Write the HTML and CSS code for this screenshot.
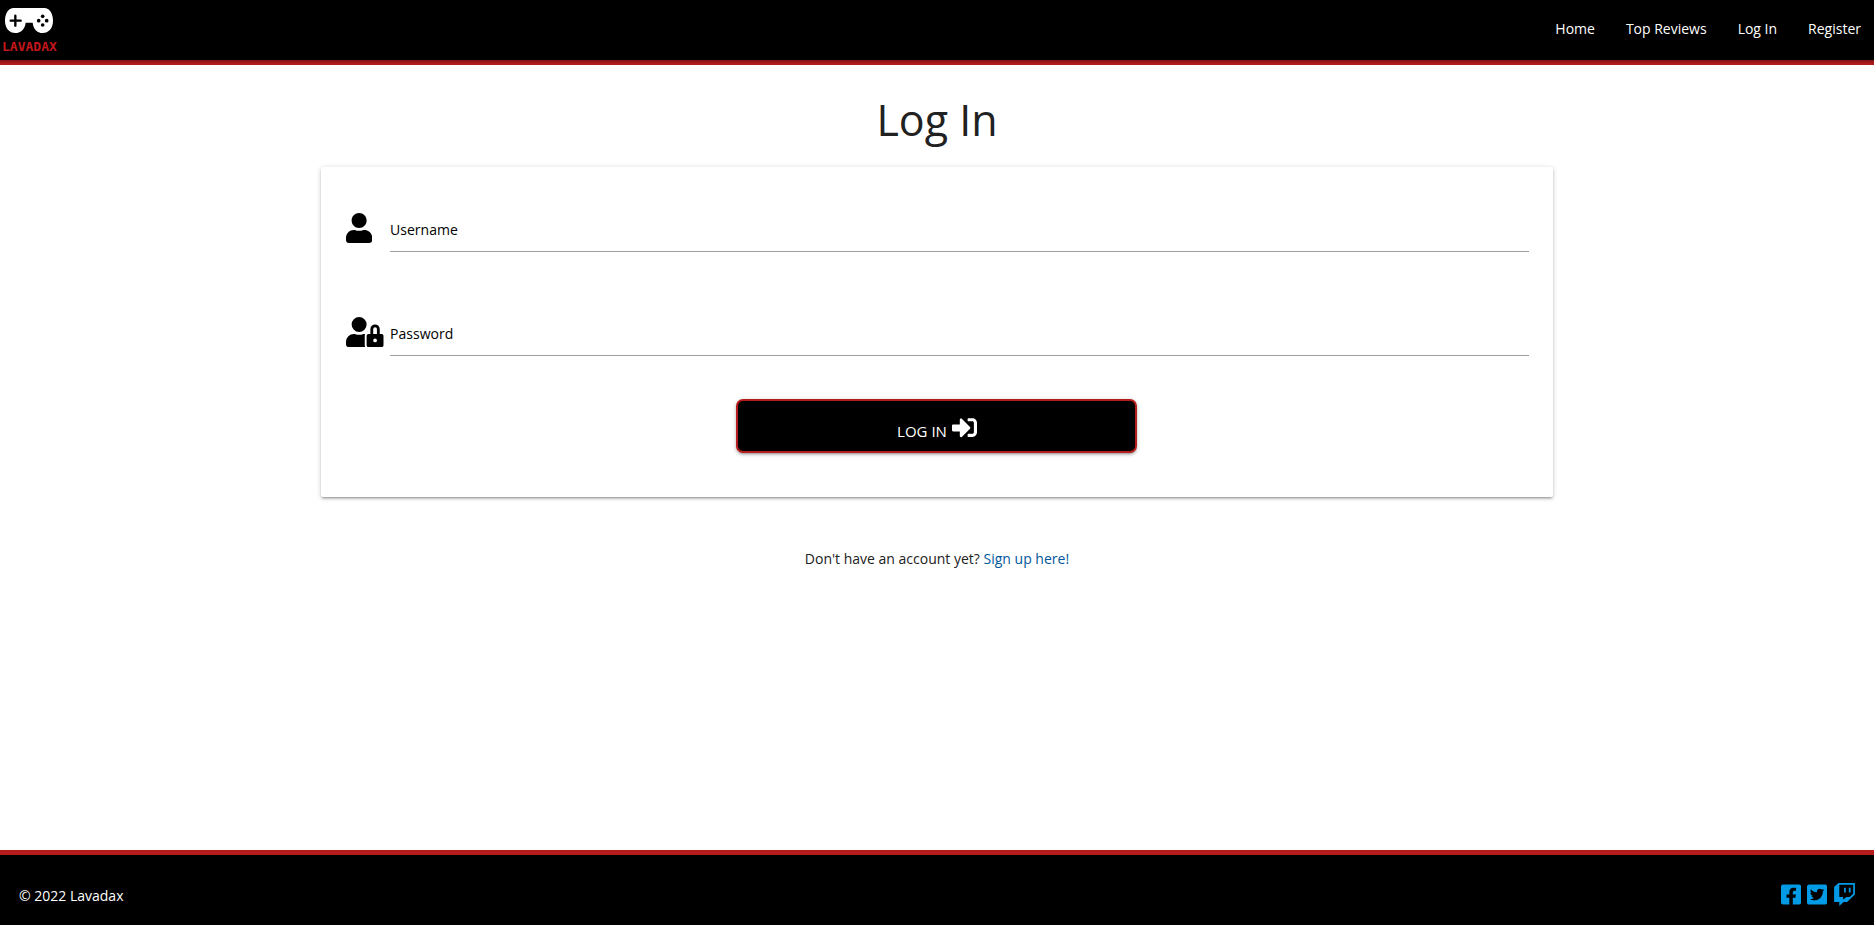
FILE: index.html
```html
<!DOCTYPE html>
<html lang="en">
<head>
<meta charset="utf-8">
<title>Lavadax - Log In</title>
<link rel="stylesheet" href="styles.css">
</head>
<body>
<header class="site-header">
  <a class="logo" href="#" aria-label="Lavadax home">
    <svg class="logo-pad" viewBox="0 0 144 75" aria-hidden="true">
      <path fill="#fff" d="M24 0H120C135 2 144 18 144 38C144 60 131 75 113 75C96 75 85 62 83 44H62C60 62 48 75 31 75C13 75 0 60 0 38C0 18 9 2 24 0Z"/>
      <path fill="none" stroke="#000" stroke-width="7" stroke-linecap="round" d="M31 23v30M17 38h30"/>
      <g fill="#000"><circle cx="113" cy="25" r="5.500"/><circle cx="113" cy="51" r="5.500"/><circle cx="101" cy="38" r="5.500"/><circle cx="125" cy="38" r="5.500"/></g>
    </svg>
    <span class="logo-text">LAVADAX</span>
  </a>
  <nav class="site-nav">
    <a href="#">Home</a>
    <a href="#">Top Reviews</a>
    <a href="#">Log In</a>
    <a href="#">Register</a>
  </nav>
</header>
<main class="container">
  <h1 class="title">Log In</h1>
  <form class="card">
    <div class="field">
      <svg class="field-icon" viewBox="0 0 448 512" aria-hidden="true"><path d="M224 256c70.7 0 128-57.3 128-128S294.700 0 224 0 96 57.300 96 128s57.300 128 128 128zm89.600 32h-16.700c-22.200 10.200-46.900 16-72.900 16s-50.600-5.800-72.900-16h-16.700C60.200 288 0 348.200 0 422.400V464c0 26.500 21.500 48 48 48h352c26.500 0 48-21.500 48-48v-41.600c0-74.200-60.200-134.400-134.400-134.400z"/></svg>
      <div class="field-box">
        <input id="username" class="field-input" type="text">
        <label class="field-label" for="username">Username</label>
      </div>
    </div>
    <div class="field">
      <svg class="field-icon" viewBox="0 0 640 512" aria-hidden="true"><path d="M224 256A128 128 0 1 0 96 128a128 128 0 0 0 128 128zm96 64a63.080 63.080 0 0 1 8.100-30.500c-4.800-.5-9.500-1.500-14.500-1.500h-16.700a174.080 174.080 0 0 1-145.800 0h-16.700A134.430 134.430 0 0 0 0 422.400V464a48 48 0 0 0 48 48h280.900a63.540 63.540 0 0 1-8.900-32zm288-32h-32v-80a80 80 0 0 0-160 0v80h-32a32 32 0 0 0-32 32v160a32 32 0 0 0 32 32h224a32 32 0 0 0 32-32V320a32 32 0 0 0-32-32zM496 432a32 32 0 1 1 32-32 32 32 0 0 1-32 32zm32-144h-64v-80a32 32 0 0 1 64 0z"/></svg>
      <div class="field-box">
        <input id="password" class="field-input" type="password">
        <label class="field-label" for="password">Password</label>
      </div>
    </div>
    <button class="submit" type="button">
      <span>LOG IN</span>
      <svg class="submit-icon" viewBox="0 0 512 512" aria-hidden="true"><path fill="#fff" d="M416 448h-84c-6.600 0-12-5.400-12-12v-40c0-6.600 5.400-12 12-12h84c17.700 0 32-14.300 32-32V160c0-17.700-14.300-32-32-32h-84c-6.600 0-12-5.400-12-12V76c0-6.600 5.400-12 12-12h84c53 0 96 43 96 96v192c0 53-43 96-96 96zm-47-201L201 79c-15-15-41-4.500-41 17v96H24c-13.300 0-24 10.700-24 24v96c0 13.300 10.700 24 24 24h136v96c0 21.500 26 32 41 17l168-168c9.300-9.400 9.300-24.600 0-34z"/></svg>
    </button>
  </form>
  <p class="signup">Don't have an account yet? <a href="#">Sign up here!</a></p>
</main>
<footer class="site-footer">
  <span>© 2022 Lavadax</span>
  <div class="social">
    <a href="#" aria-label="Facebook"><svg viewBox="0 0 448 512"><path d="M400 32H48A48 48 0 0 0 0 80v352a48 48 0 0 0 48 48h137.250V327.690h-63V256h63v-54.640c0-62.150 37-96.480 93.670-96.480 27.140 0 55.520 4.840 55.520 4.840v61h-31.270c-30.810 0-40.420 19.120-40.420 38.730V256h68.780l-11 71.690h-57.780V480H400a48 48 0 0 0 48-48V80a48 48 0 0 0-48-48z"/></svg></a>
    <a href="#" aria-label="Twitter"><svg viewBox="0 0 448 512"><path d="M400 32H48C21.500 32 0 53.500 0 80v352c0 26.500 21.500 48 48 48h352c26.500 0 48-21.500 48-48V80c0-26.500-21.500-48-48-48zm-48.900 158.800c.2 2.800.2 5.700.2 8.500 0 86.700-66 186.600-186.600 186.600-37.200 0-71.700-10.800-100.700-29.400 5.300.6 10.400.8 15.800.8 30.700 0 58.900-10.400 81.400-28-28.800-.6-53-19.500-61.300-45.500 10.100 1.500 19.200 1.500 29.600-1.200-30-6.100-52.500-32.500-52.500-64.400v-.8c8.700 4.900 18.900 7.900 29.600 8.300a65.447 65.447 0 0 1-29.200-54.600c0-12.200 3.200-23.400 8.900-33.100 32.300 39.800 80.800 65.800 135.200 68.600-9.300-44.500 24-80.600 64-80.600 18.900 0 35.900 7.900 47.900 20.700 14.800-2.800 29-8.300 41.600-15.800-4.900 15.200-15.200 28-28.800 36.100 13.200-1.400 26-5.100 37.800-10.200-8.900 13.100-20.100 24.700-32.900 34z"/></svg></a>
    <a href="#" aria-label="Twitch"><svg viewBox="0 0 512 512"><path d="M391.170 103.470H352.540v109.700h38.630ZM285 103H246.370V212.750H285ZM120.830 0 24.310 91.420V420.580H140.140V512l96.530-91.420h77.250L487.690 256V0ZM449.070 237.750l-77.220 73.120H294.610l-67.600 64v-64H140.140V36.580H449.070Z"/></svg></a>
  </div>
</footer>
</body>
</html>
```
FILE: styles.css
```css
* {
  box-sizing: border-box;
}

body {
  margin: 0;
  min-height: 100vh;
  display: flex;
  flex-direction: column;
  background: #fff;
  color: #212121;
  font-family: "Segoe UI", "Open Sans", "Noto Sans", sans-serif;
  font-size: 14px;
  line-height: 20px;
}

a {
  text-decoration: none;
}

.site-header {
  display: flex;
  justify-content: space-between;
  height: 65px;
  background: #000;
  border-bottom: 5px solid #b71c1c;
  border-image: linear-gradient(#7f1416 60px, #b71c1c 64px) 0 0 5 0;
}

.logo {
  display: flex;
  flex-direction: column;
  align-items: center;
  gap: 7px;
  padding: 8px 2px 0;
}

.logo-pad {
  width: 48px;
  height: 25px;
}

.logo-text {
  color: #c4161c;
  font-family: "DejaVu Sans Mono", monospace;
  font-size: 13px;
  font-weight: 700;
  line-height: 14px;
}

.site-nav {
  display: flex;
  align-items: center;
  gap: 31px;
  padding: 0 13px 2px 0;
}

.site-nav a {
  color: #fff;
}

.container {
  flex: 1;
  width: 70%;
  margin: 0 auto;
  padding: 0 40px;
}

.title {
  margin: 31px 0 23px;
  font-size: 43px;
  font-weight: 400;
  line-height: 48px;
  text-align: center;
}

.card {
  display: flex;
  flex-direction: column;
  gap: 58px;
  padding: 39px 24px 44px;
  border-radius: 2px;
  box-shadow: 0 2px 2px 0 rgba(0, 0, 0, 0.14), 0 3px 1px -2px rgba(0, 0, 0, 0.12), 0 1px 5px 0 rgba(0, 0, 0, 0.2);
}

.field {
  display: grid;
  grid-template-columns: 45px 1fr;
  align-items: center;
}

.field-icon {
  height: 30px;
  margin: 0 0 2px 1px;
}

.field-box {
  position: relative;
}

.field-input {
  display: block;
  width: 100%;
  height: 46px;
  padding: 0;
  border: 0;
  border-bottom: 1px solid #9e9e9e;
  outline: 0;
  background: transparent;
  font: inherit;
}

.field-label {
  position: absolute;
  left: 0;
  top: 14px;
  color: #000;
}

.submit {
  display: flex;
  align-items: center;
  justify-content: center;
  gap: 5px;
  width: 401px;
  max-width: 100%;
  height: 54px;
  margin: -15px auto 0;
  padding: 9px 0 0;
  border: 2px solid #b71c1c;
  border-radius: 7px;
  background: #000;
  color: #fff;
  font: inherit;
  font-size: 15px;
  box-shadow: 0 2px 2px 0 rgba(0, 0, 0, 0.14), 0 3px 1px -2px rgba(0, 0, 0, 0.12), 0 1px 5px 0 rgba(0, 0, 0, 0.2);
}

.submit-icon {
  width: 25px;
  height: 25px;
  margin-bottom: 6px;
}

.signup {
  margin: 52px 0;
  text-align: center;
}

.signup a {
  color: #01579b;
}

.site-footer {
  display: flex;
  align-items: center;
  justify-content: space-between;
  height: 75px;
  padding: 11px 18px 0 19px;
  border-top: 5px solid #b71c1c;
  background: #000;
  color: #fff;
}

.social {
  display: flex;
  gap: 6px;
  padding-bottom: 3px;
}

.social svg {
  display: block;
  height: 23px;
  fill: #039be5;
}
```
